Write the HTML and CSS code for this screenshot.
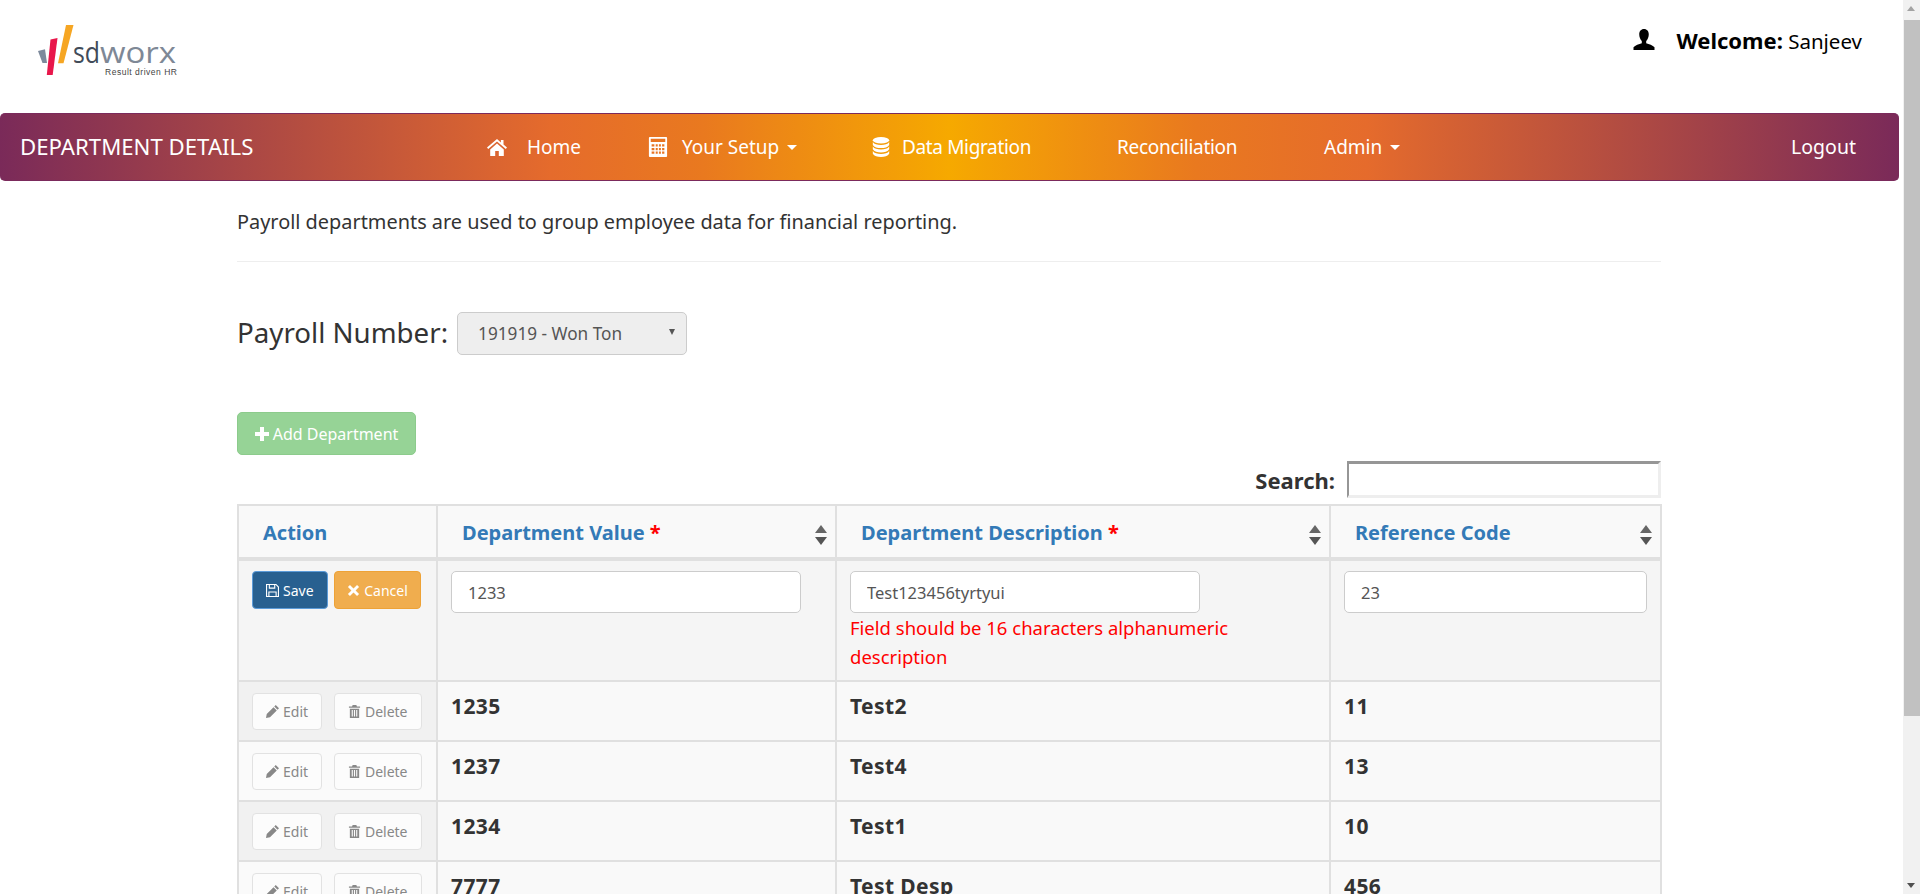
FILE: index.html
```html
<!DOCTYPE html>
<html lang="en">
<head>
    <meta charset="UTF-8">
    <title>Department Details</title>
    <link rel="stylesheet" href="styles.css">
</head>
<body>
<svg class="icon-defs" width="0" height="0">
    <symbol id="i-home" viewBox="0 0 20 18"><path d="M10 1 0 9.6l1.2 1.4L10 3.6l8.8 7.4L20 9.600 16.500 6.600V2h-2.600v2.400zM3.200 11.400V18h5v-5h3.600v5h5v-6.600L10 5.600z"/></symbol>
    <symbol id="i-calc" viewBox="0 0 20 22"><path fill-rule="evenodd" d="M1 0h18a1 1 0 0 1 1 1v20a1 1 0 0 1-1 1H1a1 1 0 0 1-1-1V1a1 1 0 0 1 1-1zm1 2v3.500h16V2zm1 6v2.500h3V8zm4.500 0v2.500h2.200V8zm3.500 0v2.500h2.200V8zm3.500 0v2.500H17V8zM3 12v2.500h3V12zm4.500 0v2.500h2.200V12zm3.500 0v2.500h2.200V12zm3.500 0v2.500H17V12zM3 16v2.500h3V16zm4.500 0v2.500h2.200V16zm3.500 0v2.500h2.200V16zm3.500 0v2.500H17V16z"/></symbol>
    <symbol id="i-db" viewBox="0 0 18 22"><ellipse cx="9" cy="3.600" rx="9" ry="3.600"/><path d="M0 5.500C1.500 8 5 8.800 9 8.800S16.500 8 18 5.500v3.200C16.500 11.300 13 12.200 9 12.200S1.500 11.300 0 8.700zM0 10.400c1.500 2.500 5 3.300 9 3.300s7.500-.8 9-3.300v3.200c-1.500 2.600-5 3.500-9 3.500s-7.500-.9-9-3.500zM0 15.300c1.500 2.500 5 3.300 9 3.300s7.500-.8 9-3.300v3.100C16.500 21 13 22 9 22s-7.500-1-9-3.600z"/></symbol>
    <symbol id="i-user" viewBox="0 0 22 22"><path d="M11 0c3.200 0 5 2.400 5 5.600 0 2.800-1.100 5.600-2.700 6.900v2.300c2.800 1.100 7 2 8.700 4.200V22H0v-3c1.700-2.200 5.900-3.100 8.700-4.200v-2.300C7.100 11.200 6 8.400 6 5.600 6 2.400 7.800 0 11 0z"/></symbol>
    <symbol id="i-save" viewBox="0 0 14 14"><path fill-rule="evenodd" d="M0 0h11l3 3v11H0zm1.200 1.200v11.600h1.300V8h9v4.800h1.300V3.600L10.500 1.200H10V5H3V1.200zm3 0V3.800h4.600V1.200zm-.5 8V12.800h6.600V9.200z"/></symbol>
    <symbol id="i-times" viewBox="0 0 14 14"><path d="M3.200 1 7 4.800 10.800 1 13 3.200 9.200 7 13 10.800 10.800 13 7 9.200 3.200 13 1 10.800 4.800 7 1 3.200z"/></symbol>
    <symbol id="i-pencil" viewBox="0 0 14 14"><path d="M10.500 0 14 3.500l-1.600 1.600-3.500-3.500zM8.100 2.400l3.500 3.500-7.300 7.300L0 14l.8-4.300z"/></symbol>
    <symbol id="i-trash" viewBox="0 0 14 14"><path fill-rule="evenodd" d="M5 0h4l.6 1.500H13V3H1V1.500h3.400zM2 4h10v10H2zm2 1.500V12.500h1.200V5.500zm2.400 0V12.500h1.200V5.500zm2.400 0V12.500H10V5.500z"/></symbol>
    <symbol id="i-plus" viewBox="0 0 14 14"><path d="M5 0h4v5h5v4H9v5H5V9H0V5h5z"/></symbol>
</svg>

<div class="page">
    <header class="top">
        <svg class="logo" viewBox="0 0 140 52" width="140" height="52">
            <polygon points="1,26 8,24.300 10,38 5.500,38" fill="#7d8a9c"/>
            <polygon points="13.500,14.500 20.500,13 15.700,50 9.800,50" fill="#e8174b"/>
            <polygon points="29,0 36.500,0 26.500,38.300 21,38.300" fill="#f6a623"/>
            <text x="36" y="38" class="logo-sd" textLength="27" lengthAdjust="spacingAndGlyphs">sd</text>
            <text x="63" y="38" class="logo-worx" textLength="76" lengthAdjust="spacingAndGlyphs">worx</text>
            <text x="68" y="50" class="logo-tag" textLength="72">Result driven HR</text>
        </svg>
        <div class="welcome">
            <svg class="ic-user"><use href="#i-user"/></svg>
            <span><b>Welcome:</b> Sanjeev</span>
        </div>
    </header>

    <nav class="navbar">
        <span class="brand">DEPARTMENT DETAILS</span>
        <ul class="nav">
            <li class="nav-home"><svg class="ic-nav"><use href="#i-home"/></svg><span>Home</span></li>
            <li class="nav-setup"><svg class="ic-nav"><use href="#i-calc"/></svg><span>Your Setup</span><i class="caret"></i></li>
            <li class="nav-data"><svg class="ic-nav"><use href="#i-db"/></svg><span>Data Migration</span></li>
            <li class="nav-recon"><span>Reconciliation</span></li>
            <li class="nav-admin"><span>Admin</span><i class="caret"></i></li>
        </ul>
        <span class="logout">Logout</span>
    </nav>

    <main class="content">
        <p class="intro">Payroll departments are used to group employee data for financial reporting.</p>
        <hr class="rule">
        <div class="payroll">
            <label class="payroll-label">Payroll Number:</label>
            <div class="fake-select"><span>191919 - Won Ton</span><i class="select-arrow"></i></div>
        </div>
        <button class="btn-add"><svg class="ic-btn"><use href="#i-plus"/></svg>Add Department</button>
        <div class="search">
            <label>Search:</label>
            <input class="search-input" type="text">
        </div>
        <table class="grid">
            <colgroup>
                <col class="col-action"><col class="col-value"><col class="col-desc"><col class="col-ref">
            </colgroup>
            <thead>
                <tr>
                    <th class="th-action">Action</th>
                    <th class="sortable">Department Value <em>*</em><i class="sort"></i></th>
                    <th class="sortable">Department Description <em>*</em><i class="sort"></i></th>
                    <th class="sortable">Reference Code<i class="sort"></i></th>
                </tr>
            </thead>
            <tbody>
                <tr class="row-edit">
                    <td class="cell-action">
                        <button class="btn btn-save"><svg class="ic-btn"><use href="#i-save"/></svg>Save</button>
                        <button class="btn btn-cancel"><svg class="ic-btn"><use href="#i-times"/></svg>Cancel</button>
                    </td>
                    <td><input class="field" type="text" value="1233"></td>
                    <td>
                        <input class="field" type="text" value="Test123456tyrtyui">
                        <div class="error">Field should be 16 characters alphanumeric description</div>
                    </td>
                    <td><input class="field field-full" type="text" value="23"></td>
                </tr>
                <tr class="row odd">
                    <td class="cell-action">
                        <button class="btn btn-off"><svg class="ic-btn"><use href="#i-pencil"/></svg>Edit</button>
                        <button class="btn btn-off"><svg class="ic-btn"><use href="#i-trash"/></svg>Delete</button>
                    </td>
                    <td>1235</td><td>Test2</td><td>11</td>
                </tr>
                <tr class="row even">
                    <td class="cell-action">
                        <button class="btn btn-off"><svg class="ic-btn"><use href="#i-pencil"/></svg>Edit</button>
                        <button class="btn btn-off"><svg class="ic-btn"><use href="#i-trash"/></svg>Delete</button>
                    </td>
                    <td>1237</td><td>Test4</td><td>13</td>
                </tr>
                <tr class="row odd">
                    <td class="cell-action">
                        <button class="btn btn-off"><svg class="ic-btn"><use href="#i-pencil"/></svg>Edit</button>
                        <button class="btn btn-off"><svg class="ic-btn"><use href="#i-trash"/></svg>Delete</button>
                    </td>
                    <td>1234</td><td>Test1</td><td>10</td>
                </tr>
                <tr class="row even">
                    <td class="cell-action">
                        <button class="btn btn-off"><svg class="ic-btn"><use href="#i-pencil"/></svg>Edit</button>
                        <button class="btn btn-off"><svg class="ic-btn"><use href="#i-trash"/></svg>Delete</button>
                    </td>
                    <td>7777</td><td>Test Desp</td><td>456</td>
                </tr>
            </tbody>
        </table>
    </main>
</div>

<div class="scrollbar">
    <i class="sb-up"></i>
    <div class="sb-thumb"></div>
    <i class="sb-down"></i>
</div>
</body>
</html>
```

FILE: styles.css
```css
html, body {
    margin: 0;
    padding: 0;
    height: 894px;
    overflow: hidden;
    background: #fff;
}
body {
    font-family: "Noto Sans", "Open Sans", sans-serif;
    font-size: 18px;
    color: #333;
}
.icon-defs {
    position: absolute;
}
.page {
    width: 1903px;
}

/* header */
.top {
    display: flex;
    justify-content: space-between;
    height: 113px;
    box-sizing: border-box;
    padding: 25px 41px 0 37px;
}
.logo {
    display: block;
    overflow: visible;
}
.logo-sd {
    font-family: "Open Sans", sans-serif;
    font-size: 30px;
    fill: #414b59;
}
.logo-worx {
    font-family: "Open Sans", sans-serif;
    font-size: 30px;
    fill: #7e8896;
}
.logo-tag {
    font-family: "Liberation Sans", sans-serif;
    font-size: 8.500px;
    fill: #444;
}
.welcome {
    display: flex;
    align-items: center;
    height: 29px;
    font-size: 20.500px;
    color: #000;
}
.ic-user {
    width: 22px;
    height: 21px;
    margin-right: 21px;
}
.welcome b {
    font-weight: 700;
    font-size: 22px;
}

/* navbar */
.navbar {
    display: flex;
    align-items: center;
    width: 1899px;
    height: 68px;
    box-sizing: border-box;
    padding: 0 43px 0 20px;
    color: #fff;
    border: 1px solid #7b2a5c;
    border-left: 0;
    border-right: 0;
    border-radius: 5px;
    background: linear-gradient(to right, #7a2a59 0%, #e56b2c 29%, #e9791f 37%, #f6a900 50%, #e9791f 63%, #e56b2c 72%, #7a2a59 100%);
}
.brand {
    font-size: 22.200px;
    width: 467px;
    margin-bottom: 2px;
}
.nav {
    display: flex;
    list-style: none;
    margin: 0;
    padding: 0;
    flex: 1;
    font-size: 19px;
}
.nav li {
    display: flex;
    align-items: center;
}
.nav-home { width: 161px; }
.nav-setup { width: 223px; }
.nav-data {
    width: 246px;
    letter-spacing: -0.35px;
}
.nav-recon {
    width: 207px;
    letter-spacing: -0.3px;
}
.ic-nav {
    width: 20px;
    height: 20px;
    fill: #fff;
    margin-right: 20px;
}
.nav-setup .ic-nav { margin-right: 14px; }
.nav-data .ic-nav { margin-right: 11px; }
.caret {
    width: 0;
    height: 0;
    margin-left: 8px;
    border-top: 5px solid #fff;
    border-left: 5px solid transparent;
    border-right: 5px solid transparent;
}
.logout {
    font-size: 19.500px;
    margin-bottom: 2px;
}

/* content */
.content {
    width: 1424px;
    margin-left: 237px;
}
.intro {
    margin: 0;
    padding-top: 28px;
    font-size: 19.900px;
    line-height: 26px;
}
.rule {
    border: 0;
    border-top: 1px solid #eee;
    margin: 26px 0 0;
}
.payroll {
    display: flex;
    align-items: center;
    margin-top: 50px;
}
.payroll-label {
    font-size: 27.700px;
    margin-right: 9px;
    margin-bottom: 3px;
}
.fake-select {
    position: relative;
    display: flex;
    align-items: center;
    box-sizing: border-box;
    width: 230px;
    height: 43px;
    padding-left: 20px;
    font-size: 17.200px;
    color: #555;
    background: #eee;
    border: 1px solid #ccc;
    border-radius: 5px;
}
.select-arrow {
    position: absolute;
    right: 11px;
    top: 16px;
    border-top: 6px solid #555;
    border-left: 3.500px solid transparent;
    border-right: 3.500px solid transparent;
}
.btn-add {
    display: flex;
    align-items: center;
    justify-content: center;
    width: 179px;
    height: 43px;
    margin-top: 57px;
    padding: 0;
    font-family: inherit;
    font-size: 16px;
    color: #fff;
    background: #96d396;
    border: 1px solid #8ccb8c;
    border-radius: 5px;
}
.btn-add .ic-btn {
    width: 14px;
    height: 14px;
    fill: #fff;
    margin-right: 4px;
}
.search {
    display: flex;
    justify-content: flex-end;
    align-items: center;
    margin-top: 6px;
    height: 37px;
    font-size: 22px;
    font-weight: 700;
}
.search label {
    margin-right: 12px;
}
.search-input {
    box-sizing: border-box;
    width: 314px;
    height: 37px;
    padding: 0;
    background: #fff;
    border-style: solid;
    border-width: 3px 3px 3px 2px;
    border-color: #969696 #eee #eee #969696;
}

/* table */
.grid {
    width: 1423px;
    margin-top: 6px;
    table-layout: fixed;
    border-collapse: collapse;
}
.col-action { width: 199px; }
.col-value { width: 399px; }
.col-desc { width: 494px; }
.col-ref { width: 331px; }
.grid th, .grid td {
    border: 2px solid #e0e0e0;
    text-align: left;
    vertical-align: top;
}
.grid th {
    position: relative;
    height: 54px;
    box-sizing: border-box;
    padding: 2px 24px 0;
    vertical-align: middle;
    font-size: 20px;
    font-weight: 700;
    color: #337ab7;
    background: #f9f9f9;
    border-bottom-width: 4px;
}
.grid th em {
    font-style: normal;
    color: #f00;
}
.sort {
    position: absolute;
    right: 8px;
    top: 19px;
    width: 12px;
    height: 20px;
}
.sort::before, .sort::after {
    content: "";
    position: absolute;
    left: 0;
    border-left: 6px solid transparent;
    border-right: 6px solid transparent;
}
.sort::before {
    top: 0;
    border-bottom: 8px solid #666;
}
.sort::after {
    bottom: 0;
    border-top: 8px solid #555;
}
.grid td {
    padding: 10px 13px 9px;
    color: #333;
    font-weight: 700;
    line-height: 24px;
}
.row-edit td {
    height: 118px;
    box-sizing: border-box;
    background: #f5f5f5;
    font-weight: 400;
}
.row td {
    height: 60px;
    box-sizing: border-box;
    padding-top: 10px;
    font-size: 21px;
    letter-spacing: 0.4px;
    line-height: 28px;
    background: #f9f9f9;
}
.row.odd .cell-action { background: #f1f1f1; }
.row.even .cell-action { background: #fafafa; }
.grid .cell-action {
    padding: 10px 13px 9px;
    white-space: nowrap;
}
.btn {
    display: inline-flex;
    align-items: center;
    justify-content: center;
    box-sizing: border-box;
    height: 38px;
    padding: 0 13px;
    margin-right: 2px;
    font-family: inherit;
    font-size: 14px;
    font-weight: 400;
    letter-spacing: 0;
    border-radius: 4px;
    border: 1px solid transparent;
    vertical-align: top;
}
.ic-btn {
    width: 13px;
    height: 13px;
    margin-right: 4px;
    fill: currentColor;
}
.btn-save {
    color: #fff;
    background: #286090;
    border-color: #5b9bd9;
}
.btn-cancel {
    padding: 0 12px;
    color: #fff;
    background: #f0ad4e;
    border-color: #eea236;
}
.btn-off {
    height: 37px;
    margin-top: 1px;
    color: #888;
    background: #fcfcfc;
    border-color: #e2e2e2;
    margin-right: 6px;
}
.field {
    display: block;
    box-sizing: border-box;
    width: 350px;
    height: 42px;
    padding: 0 16px;
    font-family: inherit;
    font-size: 16.500px;
    color: #555;
    background: #fff;
    border: 1px solid #ccc;
    border-radius: 5px;
}
.field-full {
    width: 303px;
}
.error {
    width: 420px;
    font-size: 18.500px;
    line-height: 29px;
    color: #f00;
}

/* scrollbar */
.scrollbar {
    position: fixed;
    right: 0;
    top: 0;
    bottom: 0;
    width: 17px;
    background: #f1f1f1;
}
.sb-thumb {
    position: absolute;
    left: 1px;
    right: 0;
    top: 20px;
    height: 696px;
    background: #c1c1c1;
}
.sb-up, .sb-down {
    position: absolute;
    left: 4px;
    border-left: 4.500px solid transparent;
    border-right: 4.500px solid transparent;
}
.sb-up {
    top: 6px;
    border-bottom: 5px solid #a3a3a3;
}
.sb-down {
    bottom: 6px;
    border-top: 5px solid #505050;
}
```
